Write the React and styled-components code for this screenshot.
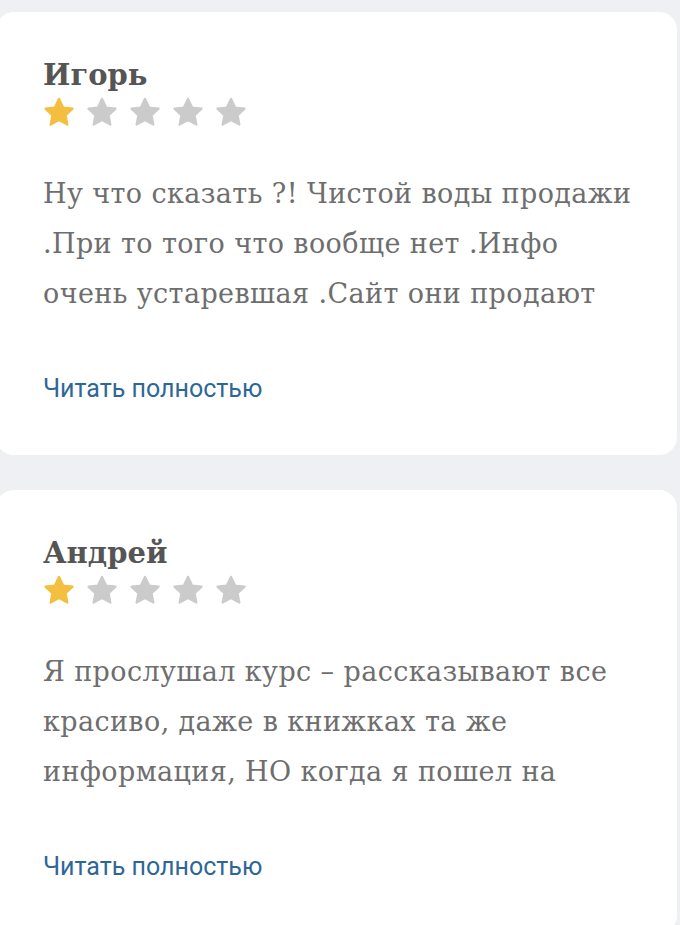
import React from "react";
import styled, { createGlobalStyle } from "styled-components";

const Global = createGlobalStyle`
  html, body {
    margin: 0;
    padding: 0;
    background: #eff0f4;
  }
`;

const Lista = styled.div`
  padding: 12px 3px 0 0;
  margin-left: -4px;
  display: flex;
  flex-direction: column;
  gap: 35px;
  height: 925px;
  overflow: hidden;
  box-sizing: border-box;
`;

const Tarjeta = styled.div`
  background: #ffffff;
  border-radius: 18px;
  padding: 46px 40px 51px 47px;
  flex-shrink: 0;
`;

const Nombre = styled.div`
  font-family: "DejaVu Serif", serif;
  font-weight: 700;
  font-size: 29px;
  color: #555555;
  line-height: 34px;
`;

const Estrellas = styled.div`
  display: flex;
  gap: 11px;
  margin-top: 5px;
`;

const Texto = styled.p`
  font-family: "DejaVu Serif", serif;
  font-size: 27px;
  letter-spacing: 0.4px;
  line-height: 50px;
  color: #6e6e6e;
  margin: 41px 0 0;
`;

const Linea = styled.span`
  display: block;
  white-space: nowrap;
`;

const Enlace = styled.a`
  display: inline-block;
  margin-top: 55px;
  font-family: Roboto, "Liberation Sans", sans-serif;
  font-size: 25px;
  line-height: 30px;
  color: #2e6796;
  text-decoration: none;
`;

const Estrella = ({ activa }) => (
  <svg width="32" height="31" viewBox="0 0 24 23">
    <path
      d="M12 1.2l3.1 6.5 7.1.9-5.2 4.9 1.3 7.1L12 17.2l-6.3 3.4 1.3-7.1-5.2-4.9 7.1-.9z"
      fill={activa ? "#f4bf3f" : "#cbcbcb"}
      stroke={activa ? "#f4bf3f" : "#cbcbcb"}
      strokeWidth="1.6"
      strokeLinejoin="round"
    />
  </svg>
);

const resenas = [
  {
    nombre: "Игорь",
    nota: 1,
    lineas: [
      "Ну что сказать ?! Чистой воды продажи",
      ".При то того что вообще нет .Инфо",
      "очень устаревшая .Сайт они продают",
    ],
  },
  {
    nombre: "Андрей",
    nota: 1,
    lineas: [
      "Я прослушал курс – рассказывают все",
      "красиво, даже в книжках та же",
      "информация, НО когда я пошел на",
    ],
  },
];

const App = () => (
  <>
    <Global />
    <Lista>
      {resenas.map((r) => (
        <Tarjeta key={r.nombre}>
          <Nombre>{r.nombre}</Nombre>
          <Estrellas>
            {[1, 2, 3, 4, 5].map((n) => (
              <Estrella key={n} activa={n <= r.nota} />
            ))}
          </Estrellas>
          <Texto>
            {r.lineas.map((l) => (
              <Linea key={l}>{l}</Linea>
            ))}
          </Texto>
          <Enlace href="#">Читать полностью</Enlace>
        </Tarjeta>
      ))}
    </Lista>
  </>
);

export default App;
